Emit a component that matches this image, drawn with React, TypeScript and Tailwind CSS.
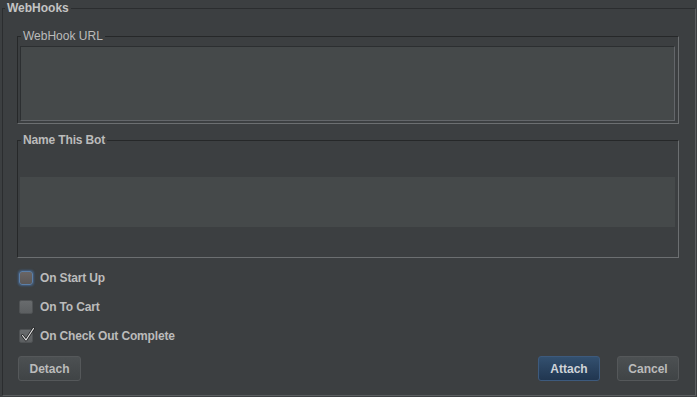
import React from "react"

function CheckRow({ label, checked, focused }: { label: string; checked?: boolean; focused?: boolean }) {
  return (
    <label className="flex h-[29px] items-center pl-[2px]">
      {/* BOX */}
      <span
        className={
          focused
            ? "relative flex h-[14px] w-[14px] items-center justify-center rounded-[3px] border border-[#5b7fa8] bg-gradient-to-b from-[#6a6564] to-[#5a5757] shadow-[0_0_2px_1px_rgba(70,110,160,0.7)]"
            : "relative flex h-[14px] w-[14px] items-center justify-center rounded-[2px] border border-[#4f5254] bg-gradient-to-b from-[#686b6d] to-[#5c5f61]"
        }
      >
        {checked && (
          <svg width="16" height="16" viewBox="0 0 16 16" className="absolute -top-[3px] left-[0px]">
            <path d="M2.5 8.5 L6 13 L13.5 1.5" fill="none" stroke="#1e1f20" strokeWidth="2.6" strokeLinecap="round" strokeLinejoin="round" />
            <path d="M2.5 8.5 L6 13 L13.5 1.5" fill="none" stroke="#e4e4e4" strokeWidth="1.2" strokeLinecap="round" strokeLinejoin="round" />
          </svg>
        )}
      </span>
      <span className="ml-[7px] text-[12px] font-bold leading-[14px] tracking-[-0.15px] text-[#bbbbbb]">{label}</span>
    </label>
  )
}

export default function App() {
  return (
    <div className="h-[397px] w-[697px] bg-[#3c3f41] pl-[2px] pt-[1px] font-['Liberation_Sans',Arial,sans-serif]">

      {/* OUTER FRAME */}
      <fieldset className="box-border h-[395px] w-[694px] border-b border-l border-r border-t border-b-[#5a5d5f] border-l-[#2b2d2f] border-r-[#5a5d5f] border-t-[#2b2d2f]">
        <legend className="ml-[2px] px-[2px] text-[12px] font-bold leading-[14px] text-[#c4c4c4]">WebHooks</legend>

        <div className="pl-[14px] pr-[16px]">

          {/* WEBHOOK URL */}
          <fieldset className="mt-[14px] border border-b-[#6c6f71] border-l-[#262829] border-r-[#6c6f71] border-t-[#262829] px-[2px] pb-[2px]">
            <legend className="ml-[1px] px-[2px] text-[12px] leading-[14px] text-[#bbbbbb]">WebHook URL</legend>
            <div className="mr-[1px] mt-[3px] h-[75px] border border-b-[#63666a] border-l-[#2c2f31] border-r-[#63666a] border-t-[#2c2f31] bg-[#45494a]" />
          </fieldset>

          {/* NAME THIS BOT */}
          <fieldset className="mt-[9px] border border-b-[#6c6f71] border-l-[#262829] border-r-[#6c6f71] border-t-[#262829] px-[2px] pb-[30px]">
            <legend className="ml-[1px] px-[2px] text-[12px] font-bold leading-[14px] tracking-[-0.15px] text-[#bbbbbb]">Name This Bot</legend>
            <div className="mr-[1px] mt-[30px] h-[50px] bg-[#45494a]" />
          </fieldset>

          {/* OPTIONS */}
          <div className="mt-[5px]">
            <CheckRow label="On Start Up" focused />
            <CheckRow label="On To Cart" />
            <CheckRow label="On Check Out Complete" checked />
          </div>

          {/* BUTTONS */}
          <div className="mt-[6px] flex items-center pl-[1px]">
            <button className="h-[25px] w-[63px] rounded-[3px] border border-[#55585a] bg-gradient-to-b from-[#4c5052] to-[#404446] text-[12px] font-bold text-[#bbbbbb]">
              Detach
            </button>
            <div className="flex-1" />
            <button className="h-[25px] w-[62px] rounded-[3px] border border-[#3d5a7d] bg-gradient-to-b from-[#33506f] to-[#213650] text-[12px] font-bold text-[#cfd3d8]">
              Attach
            </button>
            <button className="ml-[17px] h-[25px] w-[62px] rounded-[3px] border border-[#55585a] bg-gradient-to-b from-[#4c5052] to-[#404446] text-[12px] font-bold text-[#bbbbbb]">
              Cancel
            </button>
          </div>

        </div>
      </fieldset>
    </div>
  )
}
